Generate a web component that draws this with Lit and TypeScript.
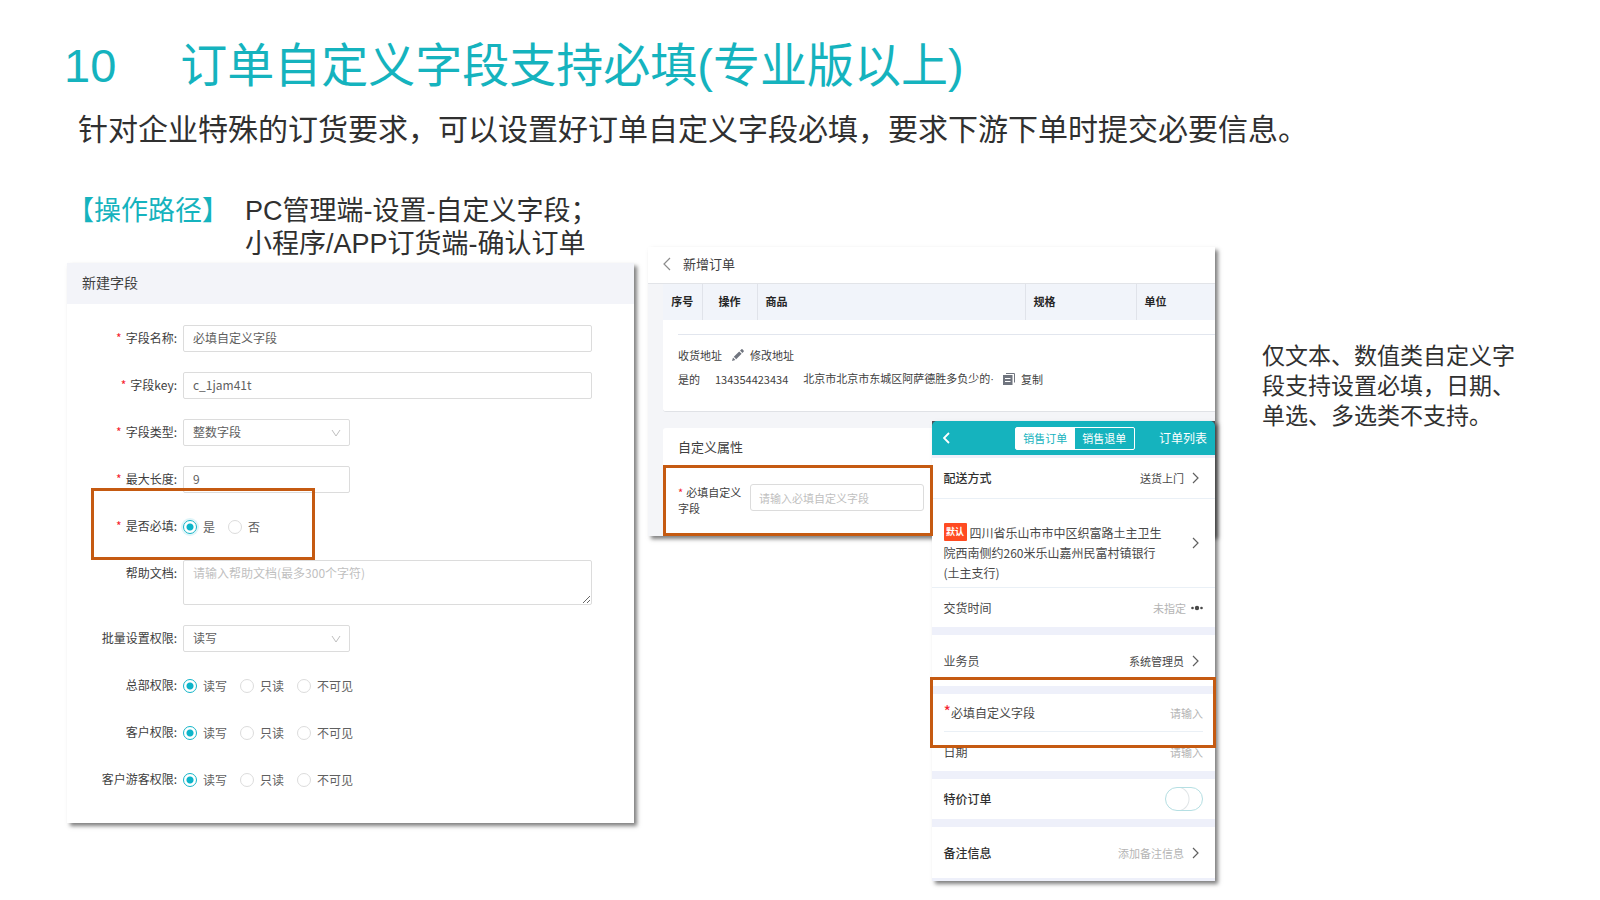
import { LitElement, html, css, svg, nothing } from "lit";
import { customElement } from "lit/decorators.js";

const base = css`
  :host,
  *,
  *::before,
  *::after {
    box-sizing: border-box;
  }
  input,
  textarea,
  select,
  button {
    font: inherit;
    margin: 0;
  }
  h1,
  h2,
  h3,
  p {
    margin: 0;
    font-weight: 400;
  }
  .highlight {
    position: absolute;
    border: 3px solid #c55a11;
    pointer-events: none;
    z-index: 2;
  }
`;

const uiFont = css`
  :host {
    font-family: "Noto Sans CJK SC", "Noto Sans", sans-serif;
  }
`;

const chevron = svg`<path d="M1 1l5 5-5 5" fill="none" stroke="currentColor" stroke-width="1.2" />`;

@customElement("field-form")
export class FieldForm extends LitElement {
  static styles = [
    base,
    uiFont,
    css`
      :host {
        display: block;
        position: relative;
        background: #fff;
        box-shadow: 3px 3px 4px rgba(0, 0, 0, 0.5);
        font-size: 12px;
        line-height: 18px;
        color: #606060;
      }
      .head {
        height: 41px;
        padding: 0 15px;
        background: #f3f4f9;
        color: #404040;
        font-size: 14px;
        line-height: 39px;
      }
      .rows {
        display: flex;
        flex-direction: column;
        gap: 20px;
        padding: 21px 42px 30px 0;
        margin: 0;
      }
      .row {
        display: flex;
        align-items: flex-start;
        gap: 6px;
      }
      .label {
        flex: none;
        width: 110px;
        color: #404040;
        line-height: 25px;
        text-align: right;
      }
      .star {
        color: #f5222d;
        margin-right: 4px;
      }
      .box {
        display: block;
        width: 100%;
        height: 27px;
        padding: 0 9px 2px;
        border: 1px solid #dcdcdc;
        border-radius: 2px;
        background: #fff;
        color: #606060;
        outline: none;
      }
      .area {
        height: 45px;
        padding: 3px 9px;
      }
      .box::placeholder {
        color: #bfbfbf;
      }
      .wide {
        flex: 1;
      }
      .short {
        position: relative;
        width: 167px;
      }
      select.box {
        appearance: none;
      }
      .arrow {
        position: absolute;
        right: 9px;
        top: 10px;
        width: 10px;
        height: 8px;
        color: #bfbfbf;
        pointer-events: none;
      }
      .radios {
        display: flex;
        gap: 13px;
        height: 27px;
        align-items: center;
      }
      .radio {
        display: flex;
        align-items: center;
        gap: 6px;
        line-height: 25px;
      }
      .radio input {
        appearance: none;
        width: 14px;
        height: 14px;
        border: 1px solid #dcdcdc;
        border-radius: 50%;
        background: #fff;
      }
      .radio input:checked {
        border-color: #13b5c8;
        background: radial-gradient(circle, #0cb4c9 3px, #fff 4px);
      }
      .required input:checked {
        box-shadow: 0 0 0 2px #dff5f9;
      }
      .mark {
        left: 24px;
        top: 225px;
        width: 224px;
        height: 72px;
      }
    `,
  ];

  private label(text: string, required: boolean, id?: string) {
    const inner = html`${required ? html`<span class="star">*</span>` : nothing}${text}:`;
    return id
      ? html`<label class="label" for=${id}>${inner}</label>`
      : html`<span class="label" id=${"l-" + text}>${inner}</span>`;
  }

  private select(id: string, value: string) {
    return html`<div class="short">
      <select class="box" id=${id}>
        <option>${value}</option>
      </select>
      <svg class="arrow" viewBox="0 0 10 8">
        <path d="M1 1l4 6 4-6" fill="none" stroke="currentColor" />
      </svg>
    </div>`;
  }

  private radios(text: string, options: string[], required = false) {
    return html`<div class="row" role="radiogroup" aria-labelledby=${"l-" + text}>
      ${this.label(text, required)}
      <div class="radios ${required ? "required" : ""}">
        ${options.map(
          (o, i) => html`<label class="radio"
            ><input type="radio" name=${text} .checked=${i === 0} />${o}</label
          >`
        )}
      </div>
    </div>`;
  }

  render() {
    const access = ["读写", "只读", "不可见"];
    return html`
      <h2 class="head">新建字段</h2>
      <form class="rows">
        <div class="row">
          ${this.label("字段名称", true, "name")}
          <div class="wide"><input class="box" id="name" value="必填自定义字段" /></div>
        </div>
        <div class="row">
          ${this.label("字段key", true, "key")}
          <div class="wide"><input class="box" id="key" value="c_1jam41t" /></div>
        </div>
        <div class="row">${this.label("字段类型", true, "type")} ${this.select("type", "整数字段")}</div>
        <div class="row">
          ${this.label("最大长度", true, "max")}
          <div class="short"><input class="box" id="max" value="9" /></div>
        </div>
        ${this.radios("是否必填", ["是", "否"], true)}
        <div class="row">
          ${this.label("帮助文档", false, "help")}
          <div class="wide">
            <textarea class="box area" id="help" placeholder="请输入帮助文档(最多300个字符)"></textarea>
          </div>
        </div>
        <div class="row">${this.label("批量设置权限", false, "batch")} ${this.select("batch", "读写")}</div>
        ${this.radios("总部权限", access)} ${this.radios("客户权限", access)}
        ${this.radios("客户游客权限", access)}
      </form>
      <div class="highlight mark"></div>
    `;
  }
}

@customElement("order-panel")
export class OrderPanel extends LitElement {
  static styles = [
    base,
    uiFont,
    css`
      :host {
        display: block;
        position: relative;
        background: #f4f5f8;
        box-shadow: 3px 3px 4px rgba(0, 0, 0, 0.5);
        font-size: 11px;
        line-height: 16px;
        color: #404040;
      }
      .bar {
        display: flex;
        align-items: center;
        gap: 12px;
        height: 36px;
        padding: 0 15px 2px;
        background: #fff;
      }
      .bar button {
        display: flex;
        padding: 0;
        border: 0;
        background: none;
        color: #8c8c8c;
      }
      .bar svg {
        width: 8px;
        height: 14px;
      }
      .bar h2,
      .props h3 {
        font-size: 13px;
        line-height: 20px;
      }
      .content {
        display: flex;
        flex-direction: column;
        gap: 16px;
        padding-left: 15px;
        border-top: 1px solid #e2e4e8;
      }
      .block {
        background: #fff;
        border-bottom: 1px solid #e0e2e6;
        border-radius: 0 0 0 3px;
      }
      .goods {
        width: 100%;
        border-collapse: collapse;
        table-layout: fixed;
        background: #f1f4fa;
      }
      .goods th {
        height: 36px;
        padding: 0 8px 2px;
        border-left: 1px solid #e0e3ea;
        color: #262626;
        font-weight: 700;
        text-align: left;
      }
      .goods th:first-child {
        border-left: 0;
      }
      .goods .c1 {
        width: 39px;
        padding: 0 0 2px;
        text-align: center;
      }
      .goods .c2 {
        width: 55px;
        padding: 0 0 2px;
        text-align: center;
      }
      .goods .c4 {
        width: 111px;
      }
      .goods .c5 {
        width: 79px;
      }
      .address {
        display: flex;
        flex-direction: column;
        gap: 7px;
        margin: 14px 0 0 15px;
        padding: 12px 0 24px;
        border-top: 1px solid #e2e6ee;
      }
      .line {
        display: flex;
        align-items: center;
      }
      .link {
        display: flex;
        align-items: center;
        gap: 6px;
        padding: 0;
        border: 0;
        background: none;
        color: inherit;
        line-height: 16px;
      }
      .link svg {
        width: 12px;
        height: 12px;
        color: #70757f;
      }
      .title-line {
        gap: 10px;
      }
      .detail {
        gap: 15px;
      }
      .place {
        display: flex;
        gap: 9px;
      }
      .cut {
        font-family: "Liberation Sans", sans-serif;
      }
      .props {
        height: 108px;
        padding: 9px 0 0 15px;
        background: #fff;
        border-radius: 3px 0 0 0;
      }
      .prop {
        display: flex;
        gap: 6px;
        padding-top: 27px;
      }
      .prop label {
        width: 66px;
      }
      .star {
        color: #f5222d;
        margin-right: 3px;
      }
      .prop input {
        width: 174px;
        height: 27px;
        padding: 0 8px;
        border: 1px solid #dcdcdc;
        border-radius: 3px;
      }
      .prop input::placeholder {
        color: #bfbfbf;
      }
      .mark {
        left: 15px;
        top: 218px;
        width: 270px;
        height: 71px;
      }
    `,
  ];

  render() {
    return html`
      <header class="bar">
        <button aria-label="返回">
          <svg viewBox="0 0 8 14"><path d="M7 1L1 7l6 6" fill="none" stroke="currentColor" stroke-width="1.2" /></svg>
        </button>
        <h2>新增订单</h2>
      </header>
      <div class="content">
        <section class="block">
          <table class="goods">
            <thead>
              <tr>
                <th class="c1">序号</th>
                <th class="c2">操作</th>
                <th>商品</th>
                <th class="c4">规格</th>
                <th class="c5">单位</th>
              </tr>
            </thead>
          </table>
          <div class="address">
            <div class="line title-line">
              <span>收货地址</span>
              <button class="link">
                <svg viewBox="0 0 12 12">
                  <path d="M0 12l1-3.4L3.4 11zM1.8 7.8l5.4-5.4 2.4 2.4-5.4 5.4zM8 1.6L9.3.4c.4-.4.9-.4 1.3 0l1 1c.4.4.4.9 0 1.3L10.4 4z" fill="currentColor" />
                </svg>
                修改地址
              </button>
            </div>
            <div class="line detail">
              <span>是的</span><span>134354423434</span>
              <span class="place">
                <span>北京市北京市东城区阿萨德胜多负少的<span class="cut">·</span></span>
                <button class="link">
                  <svg viewBox="0 0 12 12">
                    <path d="M3 .5h8.5v9" fill="none" stroke="currentColor" />
                    <path d="M0 2h9.500v10H0zM2 5v1h5.500V5zM2 8v1h5.500V8z" fill="currentColor" fill-rule="evenodd" />
                  </svg>
                  复制
                </button>
              </span>
            </div>
          </div>
        </section>
        <section class="props">
          <h3>自定义属性</h3>
          <div class="prop">
            <label for="custom"><span class="star">*</span>必填自定义字段</label>
            <input id="custom" placeholder="请输入必填自定义字段" />
          </div>
        </section>
      </div>
      <div class="highlight mark"></div>
    `;
  }
}

@customElement("order-phone")
export class OrderPhone extends LitElement {
  static styles = [
    base,
    uiFont,
    css`
      :host {
        display: block;
        background: #eef0fa;
        box-shadow: 3px 3px 4px rgba(0, 0, 0, 0.5);
        font-size: 12px;
        line-height: 18px;
        color: #484848;
      }
      .frame {
        background: #4a4f55;
      }
      .bar {
        display: flex;
        align-items: center;
        justify-content: space-between;
        height: 34px;
        padding: 0 8px 0 11px;
        border-radius: 5px 5px 0 0;
        background: #15b3be;
        color: #fff;
      }
      .back,
      .list {
        padding: 0;
        border: 0;
        background: none;
        color: #fff;
        line-height: 18px;
      }
      .back {
        display: flex;
        width: 48px;
      }
      .back svg {
        width: 7px;
        height: 12px;
      }
      .tabs {
        display: flex;
        height: 23px;
        border: 1px solid #fff;
        border-radius: 2px;
      }
      .tabs button {
        width: 59px;
        padding: 0;
        border: 0;
        background: none;
        color: #fff;
        font-size: 11px;
        line-height: 18px;
      }
      .tabs .on {
        background: #fff;
        color: #15b3be;
      }
      .list {
        width: 48px;
      }
      .cells {
        display: flex;
        flex-direction: column;
        gap: 8px;
        padding: 3px 0;
      }
      .group {
        background: #fff;
      }
      .cell {
        display: flex;
        align-items: center;
        gap: 8px;
        height: 40px;
        padding: 0 16px 0 12px;
      }
      .cell + .cell {
        border-top: 1px solid #eaf0f6;
      }
      .cell > :first-child {
        flex: 1;
      }
      .tall {
        height: 51px;
      }
      .address {
        height: 89px;
      }
      .address p {
        padding: 20px 18px 0 0;
        line-height: 20px;
      }
      .custom {
        margin: 0 12px;
        padding: 0;
      }
      .custom:first-child {
        height: 37px;
      }
      .strong {
        font-weight: 500;
        color: #303030;
      }
      .value {
        font-size: 11px;
      }
      .hint {
        color: #b4b4b4;
      }
      .go {
        width: 7px;
        height: 12px;
        color: #606060;
      }
      .dots {
        width: 12px;
        height: 6px;
        margin: 0 -4px 0 -3px;
      }
      .badge {
        display: inline-block;
        width: 23px;
        margin-right: 3px;
        border-radius: 1px;
        background: #ff4b22;
        color: #fff;
        font-size: 9px;
        font-weight: 700;
        line-height: 18px;
        text-align: center;
        vertical-align: top;
      }
      .star {
        color: #f5222d;
        font-size: 16px;
        line-height: 12px;
      }
      .custom input {
        width: 80px;
        padding: 0;
        border: 0;
        font-size: 11px;
        text-align: right;
        outline: none;
      }
      .custom input::placeholder {
        color: #b4b4b4;
      }
      .switch {
        appearance: none;
        width: 38px;
        height: 24px;
        margin-right: -4px;
        border: 1px solid #b5dfe3;
        border-radius: 12px;
        background: radial-gradient(circle at 11px 11px, #fff 11px, #dfe4e6 12px, #fff 13px);
      }
      .mark {
        left: -2px;
        right: -1px;
        top: 256px;
        height: 71px;
      }
    `,
  ];

  private go() {
    return html`<svg class="go" viewBox="0 0 7 12">${chevron}</svg>`;
  }

  render() {
    return html`
      <div class="frame">
        <header class="bar">
          <button class="back" aria-label="返回">
            <svg viewBox="0 0 7 12"><path d="M6 1L1 6l5 5" fill="none" stroke="currentColor" stroke-width="1.8" /></svg>
          </button>
          <div class="tabs"><button class="on">销售订单</button><button>销售退单</button></div>
          <button class="list">订单列表</button>
        </header>
      </div>
      <div class="cells">
        <div class="group">
          <div class="cell"><span class="strong">配送方式</span><span class="value">送货上门</span>${this.go()}</div>
          <div class="cell address">
            <p><span class="badge">默认</span>四川省乐山市市中区织富路土主卫生院西南侧约260米乐山嘉州民富村镇银行(土主支行)</p>
            ${this.go()}
          </div>
          <div class="cell">
            <span>交货时间</span><span class="value hint">未指定</span>
            <svg class="dots" viewBox="0 0 12 6" fill="#484848">
              <circle cx="1.5" cy="3" r="1.3" /><circle cx="6" cy="3" r="2.2" /><circle cx="10.5" cy="3" r="1.3" />
            </svg>
          </div>
        </div>
        <div class="group">
          <div class="cell tall"><span>业务员</span><span class="value">系统管理员</span>${this.go()}</div>
        </div>
        <div class="group">
          <div class="cell custom">
            <label for="must"><span class="star">*</span>必填自定义字段</label><input id="must" placeholder="请输入" />
          </div>
          <div class="cell custom"><label for="date">日期</label><input id="date" placeholder="请输入" /></div>
        </div>
        <div class="group">
          <div class="cell">
            <label class="strong" for="special">特价订单</label><input class="switch" type="checkbox" id="special" />
          </div>
        </div>
        <div class="group">
          <div class="cell tall">
            <span class="strong">备注信息</span><span class="value hint">添加备注信息</span>${this.go()}
          </div>
        </div>
      </div>
      <div class="highlight mark"></div>
    `;
  }
}

@customElement("app-root")
export class AppRoot extends LitElement {
  static styles = [
    base,
    css`
      :host {
        display: block;
        min-height: 100vh;
        padding: 36px 67px 19px 64px;
        background: #fff;
        color: #303030;
        font-family: "Liberation Sans", "Noto Sans CJK SC", sans-serif;
      }
      .title {
        display: flex;
        gap: 64px;
        color: #15b3be;
        font-size: 47px;
        line-height: 60px;
      }
      .lead {
        padding: 14px 14px 0;
        font-size: 30px;
        line-height: 40px;
      }
      .columns {
        display: grid;
        grid-template-columns: 567fr 567fr 304fr;
        gap: 14px;
        align-items: start;
        padding: 45px 0 0 3px;
      }
      .path {
        display: flex;
        padding: 0 0 2px;
        font-size: 27px;
        line-height: 33px;
      }
      .tag {
        width: 178px;
        color: #15b3be;
      }
      .stage {
        position: relative;
        padding-top: 52px;
      }
      .phone {
        position: absolute;
        top: 226px;
        right: 0;
        width: 50%;
      }
      .note {
        padding: 146px 0 0 33px;
        font-size: 23px;
        line-height: 30px;
      }
    `,
  ];

  render() {
    return html`
      <h1 class="title"><span>10</span><span>订单自定义字段支持必填(专业版以上)</span></h1>
      <p class="lead">针对企业特殊的订货要求，可以设置好订单自定义字段必填，要求下游下单时提交必要信息。</p>
      <main class="columns">
        <div>
          <div class="path">
            <span class="tag">【操作路径】</span>
            <span>PC管理端-设置-自定义字段；<br />小程序/APP订货端-确认订单</span>
          </div>
          <field-form></field-form>
        </div>
        <div class="stage">
          <order-panel></order-panel>
          <order-phone class="phone"></order-phone>
        </div>
        <p class="note">仅文本、数值类自定义字段支持设置必填，日期、单选、多选类不支持。</p>
      </main>
    `;
  }
}
